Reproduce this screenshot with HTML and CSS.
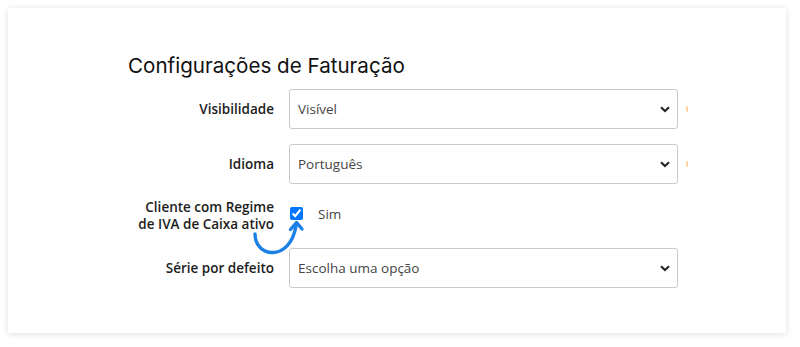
FILE: index.html
```html
<!DOCTYPE html>
<html lang="pt">
<head>
    <meta charset="UTF-8">
    <meta name="viewport" content="width=device-width, initial-scale=1.0">
    <title>Configurações de Faturação</title>
    <link rel="stylesheet" href="styles.css">
</head>
<body>
    <div class="card">
        <h2 class="card-title">Configurações de Faturação</h2>

        <div class="form">
            <label class="form-label" for="visibility">Visibilidade</label>
            <div class="form-field">
                <select id="visibility" class="form-select">
                    <option>Visível</option>
                </select>
                <span class="required-mark"></span>
            </div>

            <label class="form-label" for="language">Idioma</label>
            <div class="form-field">
                <select id="language" class="form-select">
                    <option>Português</option>
                </select>
                <span class="required-mark"></span>
            </div>

            <label class="form-label label-multi" for="cashVat">Cliente com Regime de IVA de Caixa ativo</label>
            <div class="form-field check-field">
                <input type="checkbox" id="cashVat" checked>
                <span class="check-text">Sim</span>
            </div>

            <label class="form-label" for="series">Série por defeito</label>
            <div class="form-field">
                <select id="series" class="form-select">
                    <option>Escolha uma opção</option>
                </select>
            </div>
        </div>

        <!-- highlight arrow pointing to the checkbox -->
        <svg class="hint-arrow" width="64" height="46" viewBox="0 0 64 46">
            <path d="M5 16 C5 40, 40 44, 46 8" fill="none" stroke="#1a80e6" stroke-width="3.4" stroke-linecap="round"/>
            <path d="M40.5 11.5 L46.5 4.5 L52 11" fill="none" stroke="#1a80e6" stroke-width="3.4" stroke-linecap="round" stroke-linejoin="round"/>
        </svg>
    </div>
</body>
</html>
```

FILE: styles.css
```css
* {
    margin: 0;
    padding: 0;
    box-sizing: border-box;
}

body {
    font-family: 'Open Sans', 'Liberation Sans', sans-serif;
    background-color: #ffffff;
    width: 800px;
    height: 347px;
    padding: 8px 14px 14px 8px;
}

.card {
    position: relative;
    width: 778px;
    height: 325px;
    background-color: #ffffff;
    box-shadow: 0 1px 6px rgba(40, 50, 80, 0.16);
    padding: 44px 0 0 120px;
}

.card-title {
    font-family: 'Inter', 'Lato', sans-serif;
    font-weight: 400;
    font-size: 20.6px;
    line-height: 28px;
    color: #111;
    margin-bottom: 9px;
}

.form {
    display: grid;
    grid-template-columns: 146px 410px;
    column-gap: 15px;
    row-gap: 15px;
    align-items: center;
}

.form-label {
    font-size: 13.5px;
    font-weight: 600;
    color: #1c1c1c;
    text-align: right;
    line-height: 17px;
}

.form-field {
    display: flex;
    align-items: center;
    gap: 8px;
}

.form-select {
    appearance: none;
    -webkit-appearance: none;
    width: 389px;
    height: 40px;
    border: 1px solid #c9c9c9;
    border-radius: 3px;
    padding: 0 28px 0 8px;
    font-family: 'Open Sans', 'Liberation Sans', sans-serif;
    font-size: 13.5px;
    color: #444;
    background-color: #fff;
    background-image: url("data:image/svg+xml;utf8,<svg xmlns='http://www.w3.org/2000/svg' width='10' height='7' viewBox='0 0 10 7'><path d='M1 1.2 L5 5 L9 1.2' fill='none' stroke='%23222' stroke-width='2'/></svg>");
    background-repeat: no-repeat;
    background-position: right 7px center;
}

.required-mark {
    width: 2px;
    height: 6px;
    background-color: #fbd2a4;
    border-radius: 1px;
}

.check-field {
    height: 34px;
    gap: 0;
}

.check-field input {
    width: 13px;
    height: 13px;
    margin: 0 0 6px 1px;
    accent-color: #0075ff;
}

.check-text {
    font-size: 13.5px;
    color: #444;
    margin-left: 15px;
    margin-bottom: 4px;
}

.hint-arrow {
    position: absolute;
    left: 242px;
    top: 210px;
}
```
